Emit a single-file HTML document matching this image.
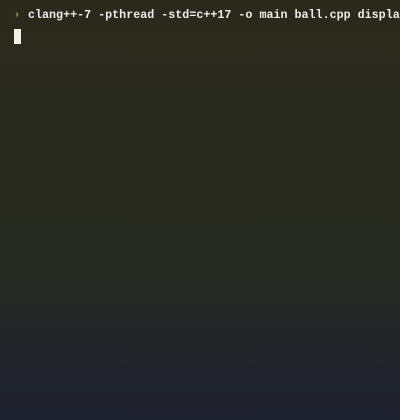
<!DOCTYPE html>
<html><head><style>
html,body{margin:0;padding:0}
body{width:400px;height:420px;overflow:hidden;background:linear-gradient(#2a2a1c 0%,#272a20 60%,#1f2230 100%);position:relative;font-family:"Liberation Mono",monospace}
.p{position:absolute;left:14px;top:10px;color:#b8a040;font-size:10px;font-weight:bold}
.t{position:absolute;left:28px;top:8px;color:#ececec;font-size:11.7px;font-weight:bold;white-space:nowrap;letter-spacing:0}
.c{position:absolute;left:14px;top:29px;width:7px;height:15px;background:#f0f0e8}
</style></head><body>
<div class="p">›</div>
<div class="t">clang++-7 -pthread -std=c++17 -o main ball.cpp displa</div>
<div class="c"></div>
</body></html>
